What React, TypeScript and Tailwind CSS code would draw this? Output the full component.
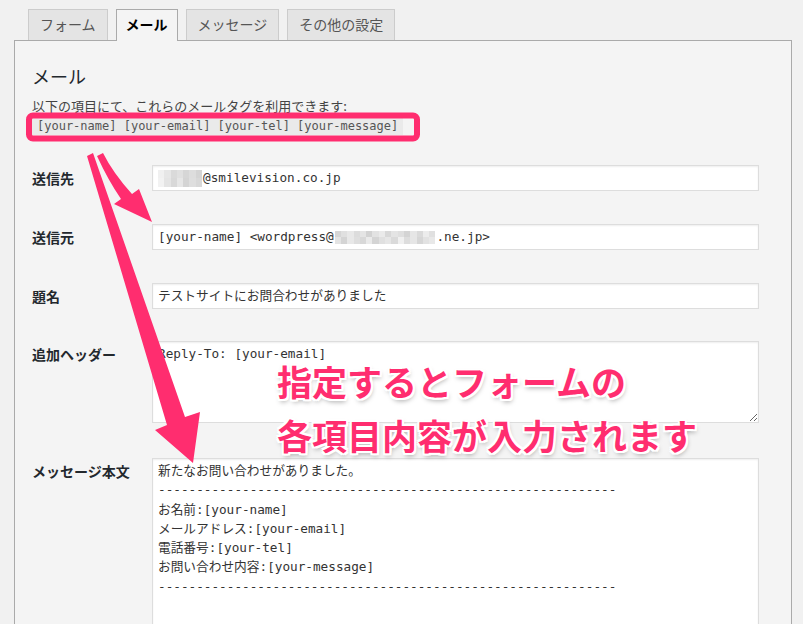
import React from 'react';

const ui = "font-['Noto_Sans_CJK_JP',sans-serif]";
const mono = "font-['DejaVu_Sans_Mono','Noto_Sans_CJK_JP',monospace]";

const tabs = [
  { label: 'フォーム', active: false },
  { label: 'メール', active: true },
  { label: 'メッセージ', active: false },
  { label: 'その他の設定', active: false },
];

// blurred (mosaic) parts of addresses
const mosaicA = [
  'bg-[#f0f0f0]', 'bg-[#e6e6e6]', 'bg-[#dadada]', 'bg-[#e0e0e0]', 'bg-[#d6d6d6]', 'bg-[#dddddd]', 'bg-[#d4d4d4]',
  'bg-[#f2f2f2]', 'bg-[#e4e4e4]', 'bg-[#d8d8d8]', 'bg-[#e6e6e6]', 'bg-[#d4d4d4]', 'bg-[#dedede]', 'bg-[#d8d8d8]',
];
const mosaicB = [
  'bg-[#d6d6d6]', 'bg-[#e0e0e0]', 'bg-[#e8e8e8]', 'bg-[#dcdcdc]', 'bg-[#e4e4e4]', 'bg-[#d2d2d2]', 'bg-[#e2e2e2]', 'bg-[#eaeaea]',
  'bg-[#d8d8d8]', 'bg-[#e4e4e4]', 'bg-[#dfdfdf]', 'bg-[#d4d4d4]', 'bg-[#e6e6e6]', 'bg-[#dadada]', 'bg-[#ececec]', 'bg-[#e0e0e0]',
  'bg-[#e4e4e4]', 'bg-[#d4d4d4]', 'bg-[#e8e8e8]', 'bg-[#dedede]', 'bg-[#d8d8d8]', 'bg-[#eaeaea]', 'bg-[#d4d4d4]', 'bg-[#e0e0e0]',
  'bg-[#e6e6e6]', 'bg-[#dadada]', 'bg-[#f0f0f0]', 'bg-[#dddddd]', 'bg-[#e6e6e6]', 'bg-[#d6d6d6]', 'bg-[#e2e2e2]', 'bg-[#e8e8e8]',
];

const dashes = '-'.repeat(60);
const body = [
  '新たなお問い合わせがありました。',
  dashes,
  'お名前:[your-name]',
  'メールアドレス:[your-email]',
  '電話番号:[your-tel]',
  'お問い合わせ内容:[your-message]',
  dashes,
].join('\n');

const Label = ({ children }: { children: React.ReactNode }) => (
  <div className="w-[120px] shrink-0 pt-[5px] text-[14px] leading-[16px] font-bold text-[#23282d]">{children}</div>
);

const TextBox = ({ children }: { children: React.ReactNode }) => (
  <div
    className={`w-[607px] h-[26px] flex items-center px-[5px] border border-[#dddddd] bg-white shadow-[inset_0_1px_2px_rgba(0,0,0,0.07)] text-[12.7px] text-[#333] whitespace-nowrap ${mono}`}
  >
    {children}
  </div>
);

export default function App() {
  return (
    <div className={`relative w-[803px] h-[624px] overflow-hidden bg-[#f1f1f1] ${ui}`}>
      {/* tabs */}
      <div className="relative z-10 flex items-start gap-[8px] h-[40px] pl-[28px] pt-[9px]">
        {tabs.map((t) =>
          t.active ? (
            <div
              key={t.label}
              className="h-[32px] px-[9px] border border-b-0 border-[#aaaaaa] bg-[#f4f4f4] text-[14px] leading-[29px] font-bold text-black"
            >
              {t.label}
            </div>
          ) : (
            <div
              key={t.label}
              className="h-[31px] px-[11px] border border-b-0 border-[#cccccc] bg-[#e4e4e4] text-[14px] leading-[29px] text-[#555]"
            >
              {t.label}
            </div>
          )
        )}
      </div>

      {/* panel */}
      <div className="ml-[14px] mr-[11px] h-[600px] border border-[#aaaaaa] bg-[#f4f4f4] pl-[17px] pt-[23px]">
        <h2 className="text-[18px] leading-[24px] text-[#23282d]">メール</h2>
        <p className="mt-[9px] text-[13px] leading-[18px] text-[#444]">以下の項目にて、これらのメールタグを利用できます:</p>
        <code className={`block w-fit mt-[2px] px-[5px] bg-[#eaeaea] text-[12px] leading-[18px] text-[#555] ${mono}`}>
          [your-name] [your-email] [your-tel] [your-message]
        </code>

        <div className="flex mt-[30px]">
          <Label>送信先</Label>
          <TextBox>
            <span className="grid grid-cols-[repeat(7,6.3px)] grid-rows-[repeat(2,8.5px)] mr-[1px]">
              {mosaicA.map((c, i) => (
                <span key={i} className={c} />
              ))}
            </span>
            @smilevision.co.jp
          </TextBox>
        </div>

        <div className="flex mt-[33px]">
          <Label>送信元</Label>
          <TextBox>
            [your-name] &lt;wordpress@
            <span className="grid grid-cols-[repeat(16,6.3px)] grid-rows-[repeat(2,6.5px)] mx-[1px]">
              {mosaicB.map((c, i) => (
                <span key={i} className={c} />
              ))}
            </span>
            .ne.jp&gt;
          </TextBox>
        </div>

        <div className="flex mt-[33px]">
          <Label>題名</Label>
          <TextBox>テストサイトにお問合わせがありました</TextBox>
        </div>

        <div className="flex mt-[32px]">
          <Label>追加ヘッダー</Label>
          <textarea
            readOnly
            defaultValue="Reply-To: [your-email]"
            className={`block w-[607px] h-[82px] px-[5px] pt-[2px] border border-[#dddddd] bg-white shadow-[inset_0_1px_2px_rgba(0,0,0,0.07)] text-[12.7px] leading-[19px] text-[#333] outline-none ${mono}`}
          />
        </div>

        <div className="flex mt-[35px]">
          <Label>メッセージ本文</Label>
          <textarea
            readOnly
            defaultValue={body}
            className={`block w-[607px] h-[220px] px-[5px] pt-[2px] border border-[#dddddd] bg-white shadow-[inset_0_1px_2px_rgba(0,0,0,0.07)] text-[12.7px] leading-[19.3px] text-[#333] outline-none overflow-hidden ${mono}`}
          />
        </div>
      </div>

      {/* annotations */}
      <svg className="absolute inset-0 pointer-events-none" width="803" height="624" viewBox="0 0 803 624">
        <rect x="29" y="115.5" width="388" height="23" rx="4" fill="none" stroke="#ff2d6f" strokeWidth="6" />
        <path d="M97 156 Q108 180 121 199 L114 204 L152 222 L139 189 L132 194 Q113 173 103 153 Z" fill="#ff2d6f" />
        <path d="M87 156 L167 425 L155 430 L193 463 L200 412 L185 417 L93 153 Z" fill="#ff2d6f" />
      </svg>
      <div
        className="absolute left-[277px] top-[354px] whitespace-nowrap text-[35px] leading-[54px] font-bold text-[#ff2d6f] [text-shadow:-2px_-2px_0_#fff,2px_-2px_0_#fff,-2px_2px_0_#fff,2px_2px_0_#fff,0_2px_0_#fff,0_-2px_0_#fff,2px_0_0_#fff,-2px_0_0_#fff,1px_3px_5px_rgba(0,0,0,0.35)]"
      >
        <div>指定するとフォームの</div>
        <div>各項目内容が入力されます</div>
      </div>
    </div>
  );
}
